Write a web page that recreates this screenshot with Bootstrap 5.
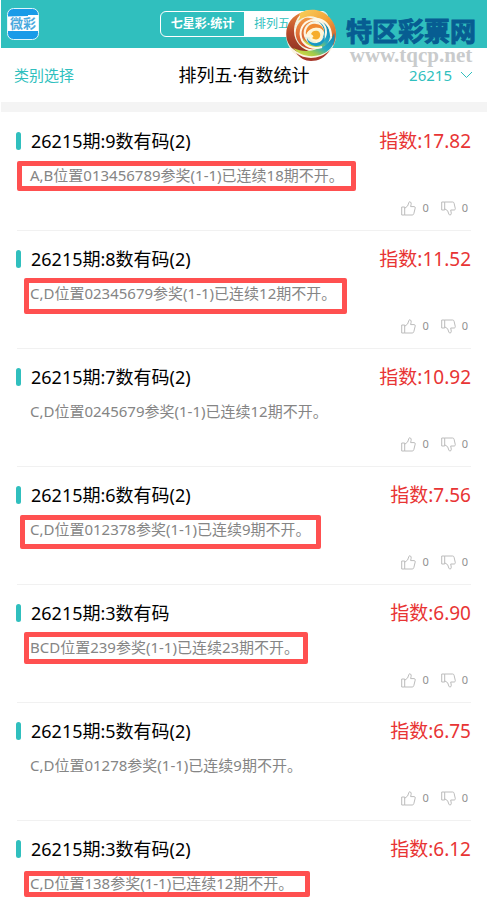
<!DOCTYPE html>
<html lang="zh-CN">
<head>
<meta charset="utf-8">
<meta name="viewport" content="width=device-width, initial-scale=1">
<title>排列五·有数统计</title>
<link rel="stylesheet" href="https://cdn.jsdelivr.net/npm/bootstrap@5.3.0/dist/css/bootstrap.min.css">
<style>
:root { --teal: #30bfbe; --alert: #ff5050; }
body { font-family: "Noto Sans", "Noto Sans CJK SC", sans-serif; color: #000; padding-left: 1px; }
.topbar { height: 48px; background: var(--teal); }
.app-logo { width: 32px; height: 32px; left: 6px; top: 8px; }
.switch { border: 1px solid #fff; border-radius: 6px; overflow: hidden; height: 26px; }
.switch .btn { font-size: 12px; line-height: 24px; width: 83px; padding: 0; border: 0; border-radius: 0; font-weight: 700; color: #fff; }
.switch .btn.active { background: #fff; color: var(--teal); font-weight: 400; }
.watermark { right: 11px; top: 9px; pointer-events: none; }
.wm-name { font: 700 26px/26px "Noto Sans CJK SC", sans-serif; color: #075d92; -webkit-text-stroke: 1px #075d92; margin-top: 8px; }
.wm-site { font: 700 21px/24px "Liberation Serif", serif; color: #c9cbcc; text-align: center; }
.subbar { height: 54px; padding: 0 14px 0 13px; font-size: 15px; }
.subbar a, .subbar .btn { color: var(--teal); font-size: 15px; line-height: 20px; }
.subbar h1 { font-size: 18px; line-height: 24px; }
.divider { height: 10px; background: #f4f4f4; margin-bottom: 1px; }
.entry { height: 118px; margin: 0 16px; padding-top: 16px; border-bottom: 1px solid #f1f1f1; }
.entry-head { height: 24px; margin-left: -1px; }
.tick { width: 5px; height: 18px; border-radius: 3px; background: var(--teal); margin-right: 10px; }
.entry h2 { font-size: 18px; line-height: 24px; }
.score { font-size: 19px; line-height: 24px; color: #e83434; }
.note { font-size: 15px; line-height: 20px; color: #858585; margin: 12px 0 0 13px; white-space: nowrap; }
.frame { border: 5px solid var(--alert); border-radius: 2px; }
.frame-a { left: -13px; top: -4px; width: 339px; height: 30px; }
.frame-b { left: -6px; top: -5px; width: 323px; height: 36px; }
.frame-c { left: -10px; top: -4px; width: 301px; height: 34px; }
.frame-d { left: -6px; top: -5px; width: 284px; height: 32px; }
.frame-e { left: -6px; top: -2px; width: 286px; height: 26px; }
.votes { margin-top: 15px; gap: 12px; padding-right: 3px; }
.votes .btn { font-size: 11px; line-height: 16px; color: #909090; gap: 6px; }
.votes svg { width: 15px; height: 15px; fill: none; stroke: #bcbcbc; stroke-width: 1; stroke-linejoin: round; }
</style>
<script src="https://cdn.jsdelivr.net/npm/bootstrap@5.3.0/dist/js/bootstrap.bundle.min.js"></script>
</head>
<body class="overflow-x-hidden bg-white">
<svg class="d-none" aria-hidden="true">
  <symbol id="up" viewBox="0 0 15 15"><path d="M.7 6h3v8h-3zM3.700 7.300 6.600 5 8 1.200Q8.500.4 9.500 1q1 .8.6 2.500L9.600 5.600h3.600q1.300.2 1 1.500l-1.400 5.600q-.3 1.200-1.500 1.300H3.700"/></symbol>
  <symbol id="down" viewBox="0 0 15 15"><path d="M.7 1h3v8h-3zM3.700 1h7.900q1.200 0 1.500 1.300l1.200 5.300q.1 1.200-1 1.400H9.700l.6 3.200q0 1.800-1.300 1.800-.8 0-1.100-.8L6.600 9.700 3.700 7.800"/></symbol>
</svg>

<header class="topbar position-relative d-flex align-items-center justify-content-center">
  <a href="#" class="app-logo position-absolute d-block" aria-label="微彩">
    <svg class="d-block" width="32" height="32" viewBox="0 0 32 32">
      <rect x=".5" y=".5" width="31" height="31" rx="6" fill="#199be8" stroke="#dff5fb"/>
      <path d="M1 8.500 21 8 21 7 31 7V23H1z" fill="#fff"/>
      <text x="3" y="20" font-size="13" font-weight="700" fill="#4aa9de" font-family="Noto Sans CJK SC">微彩</text>
    </svg>
  </a>
  <div class="switch d-flex">
    <button type="button" class="btn">七星彩·统计</button>
    <button type="button" class="btn active">排列五·统计</button>
  </div>
  <div class="watermark position-absolute d-flex z-3">
    <svg width="53" height="53" viewBox="0 0 53 53" class="me-2">
      <defs>
        <linearGradient id="g1" x1="0" y1="0" x2="0" y2="1"><stop offset="0" stop-color="#e8843a"/><stop offset=".5" stop-color="#b5482c"/><stop offset="1" stop-color="#8e3322"/></linearGradient>
        <linearGradient id="g2" x1="0" y1="0" x2="1" y2="1"><stop offset="0" stop-color="#f8d25c"/><stop offset=".5" stop-color="#f4a43a"/><stop offset="1" stop-color="#c9502c"/></linearGradient>
        <linearGradient id="g3" x1="1" y1="0" x2="0" y2="1"><stop offset="0" stop-color="#0e7fb2"/><stop offset=".45" stop-color="#22a9c4"/><stop offset=".7" stop-color="#a4cc48"/><stop offset="1" stop-color="#f2df4a"/></linearGradient>
        <linearGradient id="g5" x1="0" y1="0" x2="0" y2="1"><stop offset="0" stop-color="#f29a45"/><stop offset="1" stop-color="#d04a2a"/></linearGradient>
      </defs>
      <circle cx="26" cy="26" r="25" fill="#fbf3df" fill-opacity=".9"/>
      <path d="M18 3C5 7-1 19 2 31c3 10 14 16 26 12C17 41 9 33 9 22c0-8 3-14 9-19z" fill="url(#g1)"/>
      <path d="M14 5C22-1 36-1 44 8c8 8 9 19 4 29 0-12-4-21-12-26C29 6 21 6 13 12c2-4 3-5 1-7z" fill="url(#g2)"/>
      <path d="M20 9C10 14 8 26 14 34c6 7 16 8 23 3-9 1-16-3-18-10-2-8 4-15 12-15-3-3-7-4-11-3z" fill="url(#g5)"/>
      <path d="M49 24c3 10-4 19-14 22-11 3-21 0-27-7 9 4 18 4 26 0 8-3 13-8 15-15z" fill="url(#g3)"/>
      <path d="M11 44c9 7 24 7 34-3-5 8-12 11-19 11-6 0-11-3-15-8z" fill="#a8382a"/>
      <path d="M32 12c8 0 14 7 13 16-1 7-6 11-13 11-7 1-13-3-14-10 3 5 9 7 14 5 5-2 7-6 7-11s-3-9-7-11z" fill="url(#g3)"/>
      <path d="M30 10c9-1 16 7 16 17" fill="none" stroke="#fff8e6" stroke-width="2"/>
      <path d="M37 38c-9 3-19-1-21-10-2-9 4-17 13-17 7 0 12 5 12 12 0 6-4 10-10 10" fill="none" stroke="#fff8e6" stroke-width="2"/>
      <path d="M21 26c-1-7 4-12 10-11 5 0 8 4 8 8-2-4-5-5-9-4-4 1-7 3-9 7z" fill="#f08a30"/>
      <path d="M21 27c1-5 6-9 11-8 5 0 7 4 6 8-1 5-6 7-10 5-3-1-4-3-3-6-2 0-3 0-4 1z" fill="#fff6d8"/>
      <path d="M26 25c1-3 4-4 7-3 3 2 3 6 0 8-2 1-5 0-6-1 2-1 2-2-1-4z" fill="#f6ad2c"/>
      <path d="M22 29c2 5 9 7 14 3 2-2 3-4 3-7 3 7-3 13-9 12-5-1-8-4-8-8z" fill="#1798c6"/>
    </svg>
    <div>
      <div class="wm-name">特区彩票网</div>
      <div class="wm-site">www.tqcp.net</div>
    </div>
  </div>
</header>

<nav class="subbar d-flex align-items-center justify-content-between position-relative">
  <a href="#" class="text-decoration-none">类别选择</a>
  <h1 class="m-0 fw-normal position-absolute start-50 translate-middle-x">排列五·有数统计</h1>
  <button type="button" class="btn p-0 border-0 d-flex align-items-center gap-2">26215
    <svg width="13" height="8" viewBox="0 0 13 8" fill="none" stroke="#30bfbe"><path d="m1 1 5.500 5.500L12 1"/></svg>
  </button>
</nav>
<div class="divider"></div>

<main>
  <article class="entry">
    <div class="entry-head d-flex align-items-center"><span class="tick"></span><h2 class="m-0 fw-normal">26215期:9数有码(2)</h2><span class="score ms-auto">指数:17.82</span></div>
    <p class="note position-relative mb-0">A,B位置013456789参奖(1-1)已连续18期不开。<span class="frame frame-a position-absolute"></span></p>
    <div class="votes d-flex justify-content-end"><button type="button" class="btn p-0 border-0 d-flex align-items-center" aria-label="赞 0"><svg><use href="#up"/></svg>0</button><button type="button" class="btn p-0 border-0 d-flex align-items-center" aria-label="踩 0"><svg><use href="#down"/></svg>0</button></div>
  </article>
  <article class="entry">
    <div class="entry-head d-flex align-items-center"><span class="tick"></span><h2 class="m-0 fw-normal">26215期:8数有码(2)</h2><span class="score ms-auto">指数:11.52</span></div>
    <p class="note position-relative mb-0">C,D位置02345679参奖(1-1)已连续12期不开。<span class="frame frame-b position-absolute"></span></p>
    <div class="votes d-flex justify-content-end"><button type="button" class="btn p-0 border-0 d-flex align-items-center" aria-label="赞 0"><svg><use href="#up"/></svg>0</button><button type="button" class="btn p-0 border-0 d-flex align-items-center" aria-label="踩 0"><svg><use href="#down"/></svg>0</button></div>
  </article>
  <article class="entry">
    <div class="entry-head d-flex align-items-center"><span class="tick"></span><h2 class="m-0 fw-normal">26215期:7数有码(2)</h2><span class="score ms-auto">指数:10.92</span></div>
    <p class="note position-relative mb-0">C,D位置0245679参奖(1-1)已连续12期不开。</p>
    <div class="votes d-flex justify-content-end"><button type="button" class="btn p-0 border-0 d-flex align-items-center" aria-label="赞 0"><svg><use href="#up"/></svg>0</button><button type="button" class="btn p-0 border-0 d-flex align-items-center" aria-label="踩 0"><svg><use href="#down"/></svg>0</button></div>
  </article>
  <article class="entry">
    <div class="entry-head d-flex align-items-center"><span class="tick"></span><h2 class="m-0 fw-normal">26215期:6数有码(2)</h2><span class="score ms-auto">指数:7.56</span></div>
    <p class="note position-relative mb-0">C,D位置012378参奖(1-1)已连续9期不开。<span class="frame frame-c position-absolute"></span></p>
    <div class="votes d-flex justify-content-end"><button type="button" class="btn p-0 border-0 d-flex align-items-center" aria-label="赞 0"><svg><use href="#up"/></svg>0</button><button type="button" class="btn p-0 border-0 d-flex align-items-center" aria-label="踩 0"><svg><use href="#down"/></svg>0</button></div>
  </article>
  <article class="entry">
    <div class="entry-head d-flex align-items-center"><span class="tick"></span><h2 class="m-0 fw-normal">26215期:3数有码</h2><span class="score ms-auto">指数:6.90</span></div>
    <p class="note position-relative mb-0">BCD位置239参奖(1-1)已连续23期不开。<span class="frame frame-d position-absolute"></span></p>
    <div class="votes d-flex justify-content-end"><button type="button" class="btn p-0 border-0 d-flex align-items-center" aria-label="赞 0"><svg><use href="#up"/></svg>0</button><button type="button" class="btn p-0 border-0 d-flex align-items-center" aria-label="踩 0"><svg><use href="#down"/></svg>0</button></div>
  </article>
  <article class="entry">
    <div class="entry-head d-flex align-items-center"><span class="tick"></span><h2 class="m-0 fw-normal">26215期:5数有码(2)</h2><span class="score ms-auto">指数:6.75</span></div>
    <p class="note position-relative mb-0">C,D位置01278参奖(1-1)已连续9期不开。</p>
    <div class="votes d-flex justify-content-end"><button type="button" class="btn p-0 border-0 d-flex align-items-center" aria-label="赞 0"><svg><use href="#up"/></svg>0</button><button type="button" class="btn p-0 border-0 d-flex align-items-center" aria-label="踩 0"><svg><use href="#down"/></svg>0</button></div>
  </article>
  <article class="entry">
    <div class="entry-head d-flex align-items-center"><span class="tick"></span><h2 class="m-0 fw-normal">26215期:3数有码(2)</h2><span class="score ms-auto">指数:6.12</span></div>
    <p class="note position-relative mb-0">C,D位置138参奖(1-1)已连续12期不开。<span class="frame frame-e position-absolute"></span></p>
  </article>
</main>
</body>
</html>
